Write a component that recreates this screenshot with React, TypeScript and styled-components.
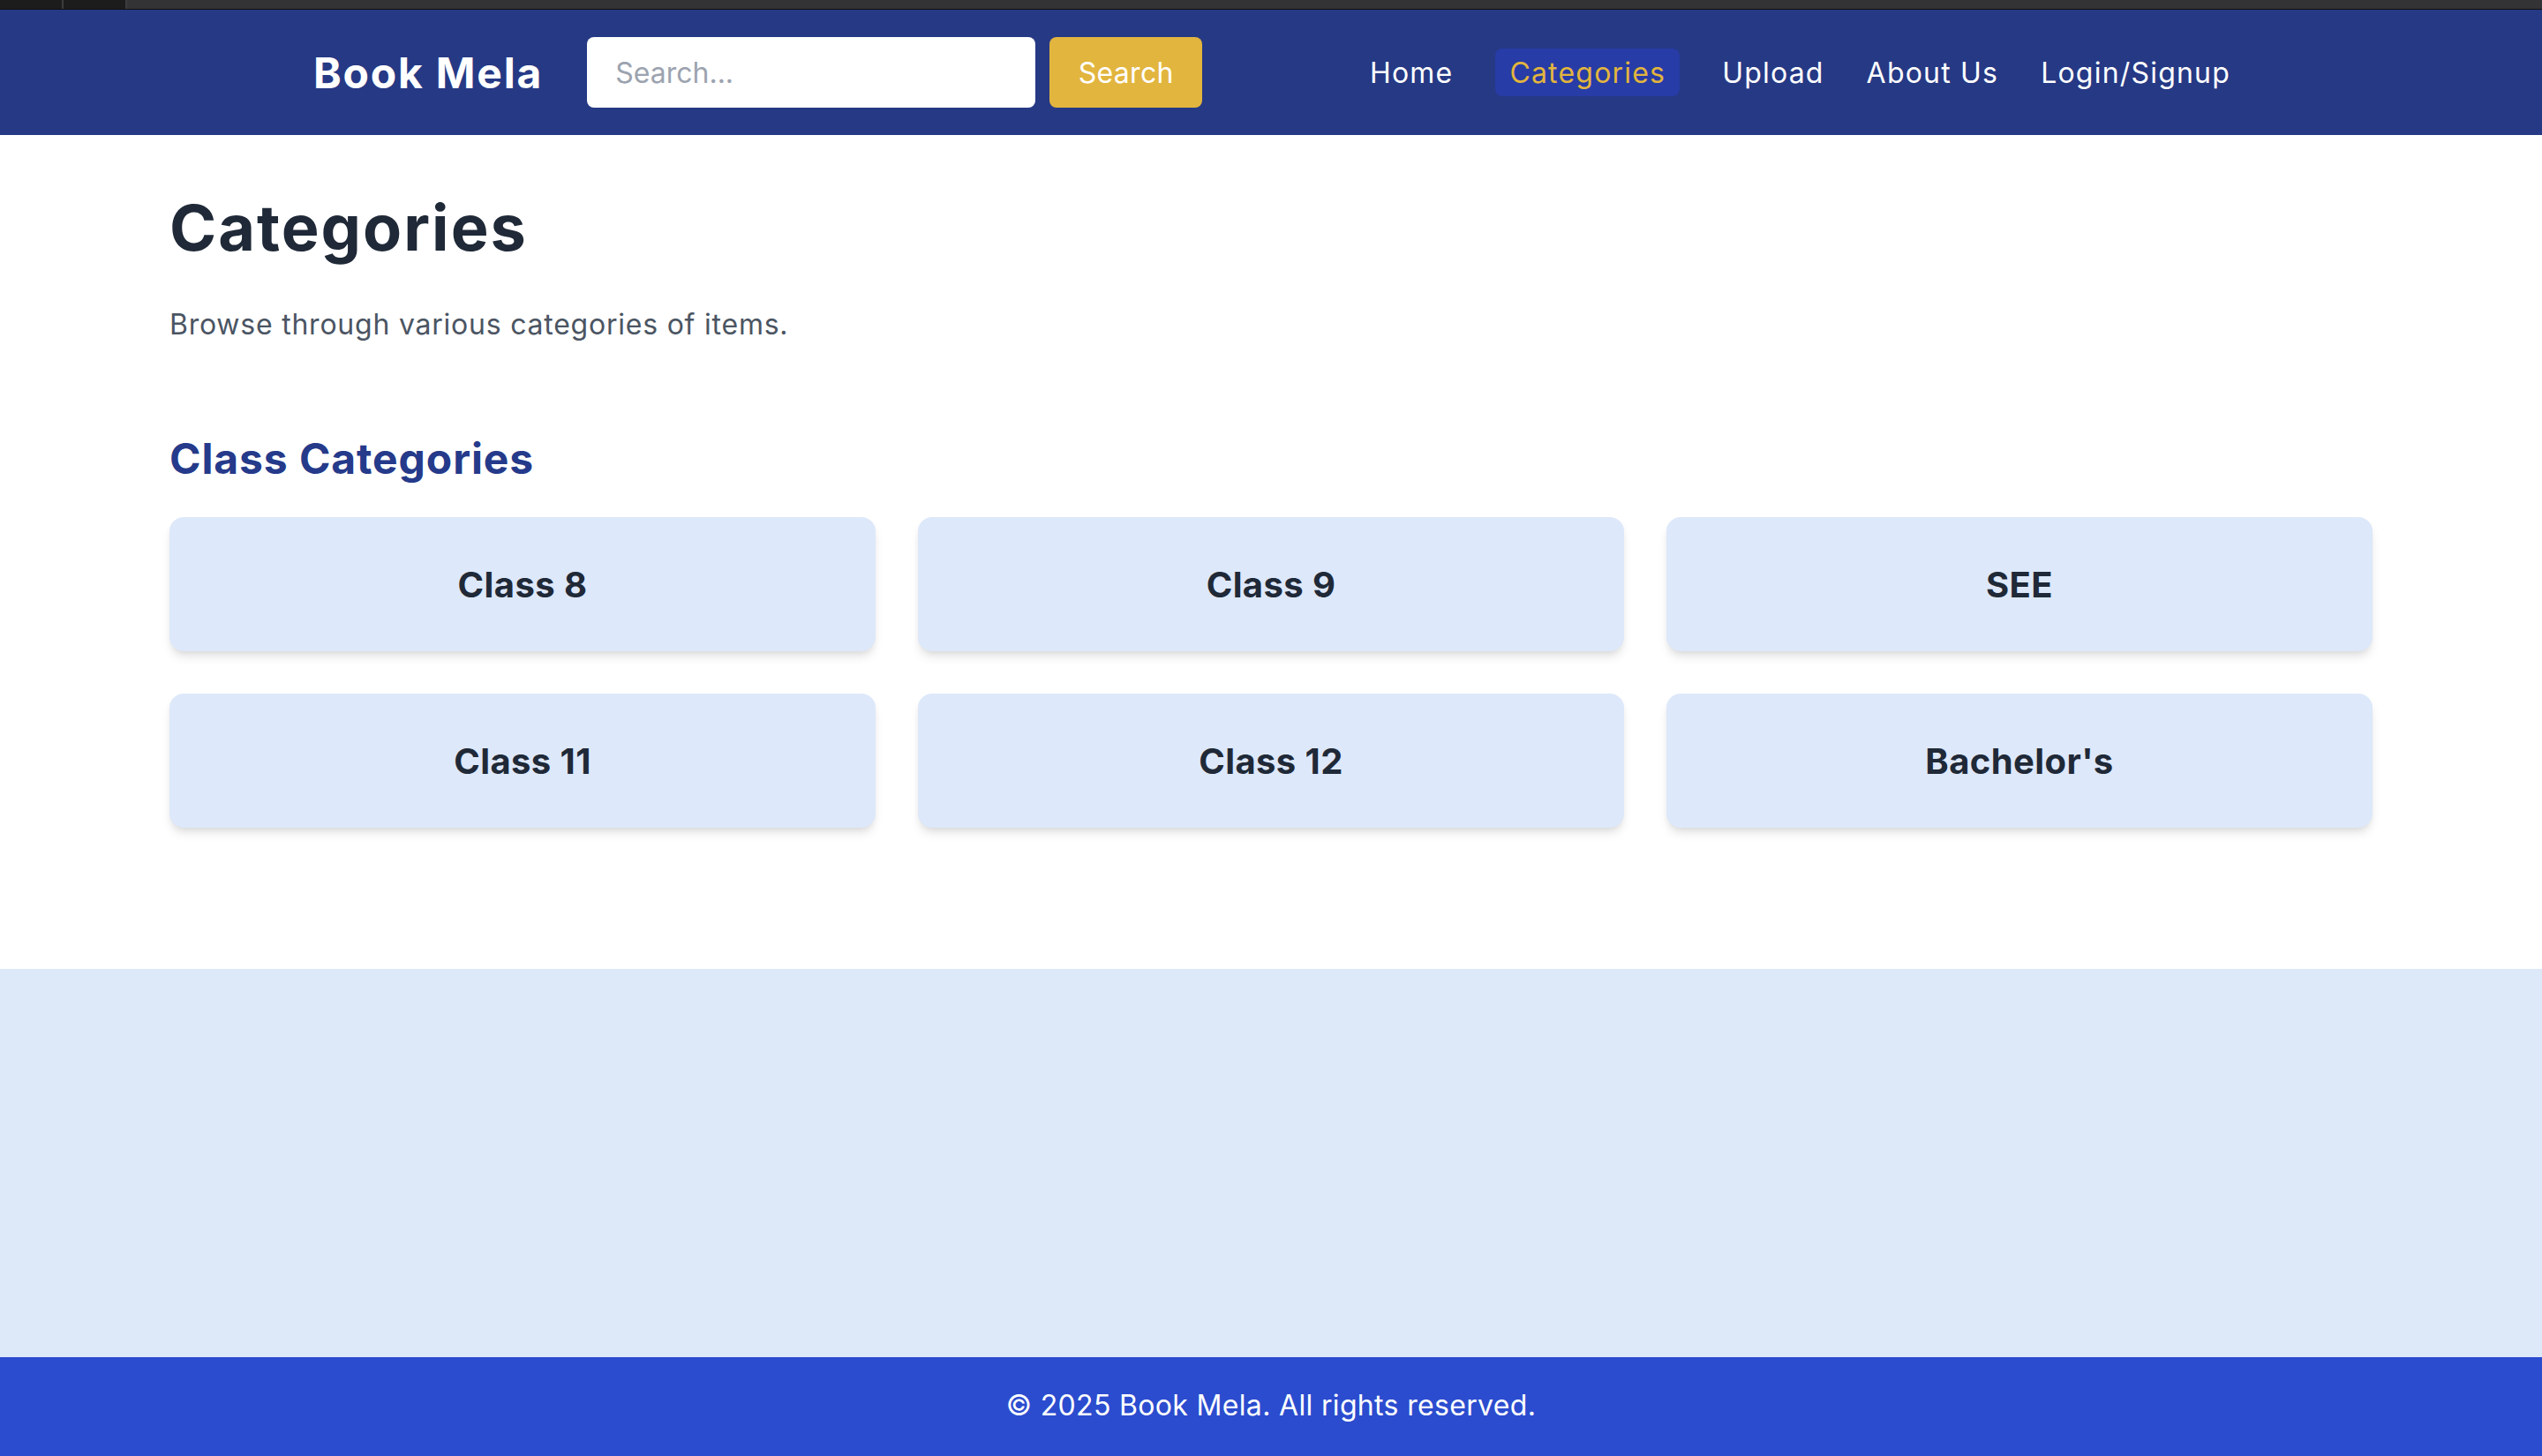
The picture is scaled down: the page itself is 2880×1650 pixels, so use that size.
import React from "react";
import styled, { createGlobalStyle } from "styled-components";

const GlobalStyle = createGlobalStyle`
  html, body {
    margin: 0;
    padding: 0;
    background: #dde8f9;
  }
  * { box-sizing: border-box; }
  body {
    font-family: Inter, "Open Sans", "DejaVu Sans", sans-serif;
  }
`;

const Page = styled.div`
  min-height: 100vh;
  display: flex;
  flex-direction: column;
`;

const ChromeStrip = styled.div`
  height: 11px;
  display: flex;
  background: #333335;
  border-bottom: 1px solid #0f0f10;
`;

const ChromeTab = styled.div`
  width: 72px;
  height: 10px;
  background: #1c1c1c;
  border-right: 2px solid #3c3c3e;
`;

const Header = styled.header`
  height: 142px;
  background: #263985;
  display: flex;
  align-items: center;
  justify-content: space-between;
  padding: 0 353px 0 355px;
`;

const LeftGroup = styled.div`
  display: flex;
  align-items: center;
`;

const Logo = styled.div`
  color: #ffffff;
  font-size: 48px;
  font-weight: 700;
  letter-spacing: 1.8px;
  margin-right: 50px;
  white-space: nowrap;
`;

const SearchInput = styled.input`
  width: 508px;
  height: 80px;
  border: none;
  border-radius: 8px;
  background: #ffffff;
  padding: 0 32px;
  font-family: inherit;
  font-size: 32px;
  color: #1f2937;
  outline: none;
  &::placeholder {
    color: #9ca3af;
  }
`;

const SearchButton = styled.button`
  margin-left: 16px;
  height: 80px;
  width: 173px;
  border: none;
  border-radius: 8px;
  background: #e2b53e;
  color: #ffffff;
  font-family: inherit;
  font-size: 32px;
  letter-spacing: 0.3px;
  padding: 0;
`;

const Nav = styled.nav`
  display: flex;
  align-items: center;
  gap: 48px;
`;

const NavLink = styled.a<{ $active?: boolean }>`
  color: ${(p) => (p.$active ? "#e2b53e" : "#ffffff")};
  background: ${(p) => (p.$active ? "#273ca6" : "transparent")};
  padding: ${(p) => (p.$active ? "0 16px" : "0")};
  border-radius: 8px;
  height: 54px;
  display: flex;
  align-items: center;
  font-size: 32px;
  letter-spacing: 1.2px;
  text-decoration: none;
  white-space: nowrap;
`;

const Main = styled.main`
  background: #ffffff;
  padding: 65px 192px 160px 192px;
`;

const Title = styled.h1`
  margin: 0;
  font-size: 72px;
  line-height: 80px;
  font-weight: 700;
  letter-spacing: 2px;
  color: #1f2937;
`;

const Subtitle = styled.p`
  margin: 46px 0 0 0;
  font-size: 32px;
  line-height: 48px;
  letter-spacing: 0.77px;
  color: #4b5563;
`;

const SectionTitle = styled.h2`
  margin: 96px 0 0 0;
  font-size: 48px;
  line-height: 64px;
  font-weight: 700;
  letter-spacing: 0.9px;
  color: #253a8a;
`;

const CardGrid = styled.div`
  margin-top: 34px;
  display: grid;
  grid-template-columns: repeat(3, 1fr);
  gap: 48px;
`;

const Card = styled.div`
  height: 152px;
  background: #dde8fa;
  border-radius: 16px;
  box-shadow: 0 8px 12px -2px rgba(0, 0, 0, 0.1), 0 4px 8px -4px rgba(0, 0, 0, 0.1);
  display: flex;
  align-items: center;
  justify-content: center;
  font-size: 40px;
  font-weight: 700;
  letter-spacing: 0.4px;
  color: #1f2937;
`;

const Filler = styled.div`
  flex: 1;
  background: #dde8f9;
`;

const Footer = styled.footer`
  height: 112px;
  background: #2b4ccf;
  color: #ffffff;
  display: flex;
  align-items: center;
  justify-content: center;
  font-size: 32px;
  letter-spacing: 0.33px;
  padding-bottom: 4px;
`;

const categories = ["Class 8", "Class 9", "SEE", "Class 11", "Class 12", "Bachelor's"];
const links = ["Home", "Categories", "Upload", "About Us", "Login/Signup"];

export default function App() {
  return (
    <Page>
      <GlobalStyle />
      <ChromeStrip>
        <ChromeTab />
        <ChromeTab />
      </ChromeStrip>
      <Header>
        <LeftGroup>
          <Logo>Book Mela</Logo>
          <SearchInput placeholder="Search..." />
          <SearchButton>Search</SearchButton>
        </LeftGroup>
        <Nav>
          {links.map((l) => (
            <NavLink key={l} href="#" $active={l === "Categories"}>
              {l}
            </NavLink>
          ))}
        </Nav>
      </Header>
      <Main>
        <Title>Categories</Title>
        <Subtitle>Browse through various categories of items.</Subtitle>
        <SectionTitle>Class Categories</SectionTitle>
        <CardGrid>
          {categories.map((c) => (
            <Card key={c}>{c}</Card>
          ))}
        </CardGrid>
      </Main>
      <Filler />
      <Footer>© 2025 Book Mela. All rights reserved.</Footer>
    </Page>
  );
}
